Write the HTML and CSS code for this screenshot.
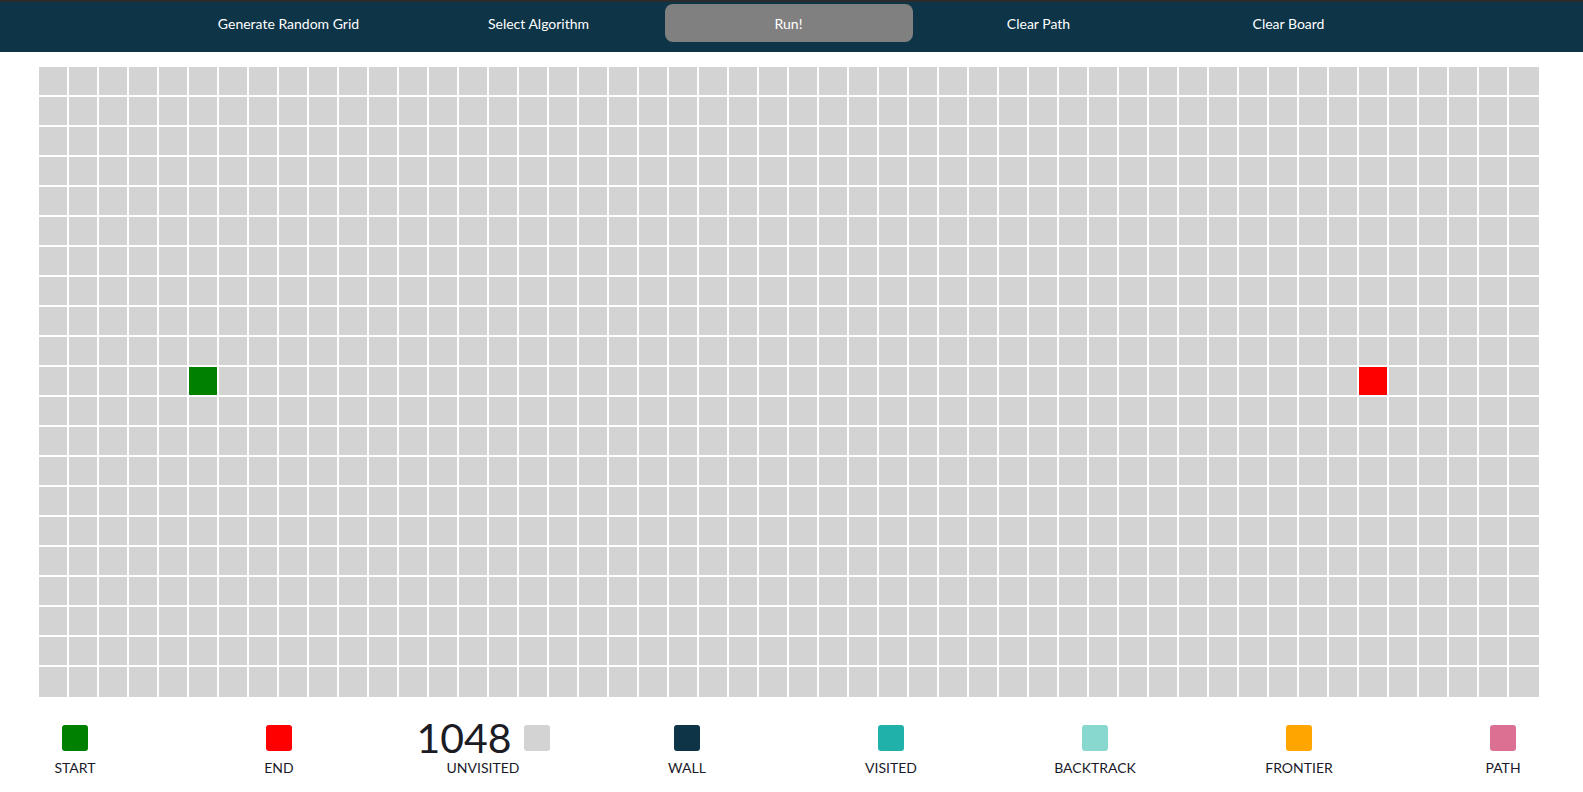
FILE: index.html
```html
<!DOCTYPE html>
<html lang="en">
<head>
<meta charset="utf-8">
<title>Pathfinding Visualizer</title>
<link rel="stylesheet" href="styles.css">
</head>
<body>
<nav class="navbar">
  <button class="nav-btn">Generate Random Grid</button>
  <button class="nav-btn">Select Algorithm</button>
  <button class="nav-btn nav-btn-run">Run!</button>
  <button class="nav-btn">Clear Path</button>
  <button class="nav-btn">Clear Board</button>
</nav>
<main class="board-wrap">
  <div class="board" id="board"></div>
</main>
<footer class="legend">
  <div class="legend-item">
    <div class="swatch-row"><span class="swatch swatch-start"></span></div>
    <div class="legend-label">Start</div>
  </div>
  <div class="legend-item">
    <div class="swatch-row"><span class="swatch swatch-end"></span></div>
    <div class="legend-label">End</div>
  </div>
  <div class="legend-item">
    <div class="swatch-row"><span class="count">1048</span><span class="swatch swatch-unvisited"></span></div>
    <div class="legend-label">Unvisited</div>
  </div>
  <div class="legend-item">
    <div class="swatch-row"><span class="swatch swatch-wall"></span></div>
    <div class="legend-label">Wall</div>
  </div>
  <div class="legend-item">
    <div class="swatch-row"><span class="swatch swatch-visited"></span></div>
    <div class="legend-label">Visited</div>
  </div>
  <div class="legend-item">
    <div class="swatch-row"><span class="swatch swatch-backtrack"></span></div>
    <div class="legend-label">Backtrack</div>
  </div>
  <div class="legend-item">
    <div class="swatch-row"><span class="swatch swatch-frontier"></span></div>
    <div class="legend-label">Frontier</div>
  </div>
  <div class="legend-item">
    <div class="swatch-row"><span class="swatch swatch-path"></span></div>
    <div class="legend-label">Path</div>
  </div>
</footer>
<script src="script.js"></script>
</body>
</html>
```

FILE: styles.css
```css
* { box-sizing: border-box; }

body {
  margin: 0;
  font-family: Lato, "Liberation Sans", sans-serif;
  background: #ffffff;
  color: #1c1c28;
}

.navbar {
  display: flex;
  justify-content: center;
  background: #0d3447;
  border-top: 2px solid #2b2b2b;
  padding: 2px 6px 10px 0;
  height: 52px;
}

.nav-btn {
  width: 248px;
  height: 38px;
  margin: 0 1px;
  border: none;
  border-radius: 8px;
  background: transparent;
  color: #ffffff;
  font-family: Lato, "Liberation Sans", sans-serif;
  font-size: 14px;
  cursor: pointer;
}

.nav-btn-run {
  background: #808080;
}

.board-wrap {
  padding: 15px 0 0 39px;
}

.board {
  display: grid;
  grid-template-columns: repeat(49, 28px) 30px;
  grid-template-rows: repeat(20, 28px) 30px;
  gap: 2px;
  width: 1500px;
}

.cell {
  background: #d3d3d3;
}

.cell-start { background: #008000; }
.cell-end { background: #ff0000; }

.legend {
  display: flex;
  justify-content: space-between;
  padding: 28px 10px 0 5px;
  width: 1583px;
}

.legend-item {
  width: 140px;
  display: flex;
  flex-direction: column;
  align-items: center;
}

.swatch-row {
  display: flex;
  justify-content: center;
  align-items: center;
  gap: 12px;
  height: 26px;
}

.count {
  font-size: 41px;
  line-height: 26px;
  font-weight: 400;
  color: #1c1c24;
}

.swatch {
  display: block;
  width: 26px;
  height: 26px;
  border-radius: 3px;
}

.swatch-start { background: #008000; }
.swatch-end { background: #ff0000; }
.swatch-unvisited { background: #d3d3d3; }
.swatch-wall { background: #0d3447; }
.swatch-visited { background: #20b2aa; }
.swatch-backtrack { background: #88d8d0; }
.swatch-frontier { background: #ffa500; }
.swatch-path { background: #db7093; }

.legend-label {
  margin-top: 8px;
  font-size: 14px;
  text-transform: uppercase;
  color: #1a1a2a;
}
```

FILE: script.js
```js
var board = document.getElementById('board');
var rows = 21, cols = 50;
for (var r = 0; r < rows; r++) {
  for (var c = 0; c < cols; c++) {
    var cell = document.createElement('div');
    cell.className = 'cell';
    if (r === 10 && c === 5) cell.className += ' cell-start';
    if (r === 10 && c === 44) cell.className += ' cell-end';
    board.appendChild(cell);
  }
}
```
